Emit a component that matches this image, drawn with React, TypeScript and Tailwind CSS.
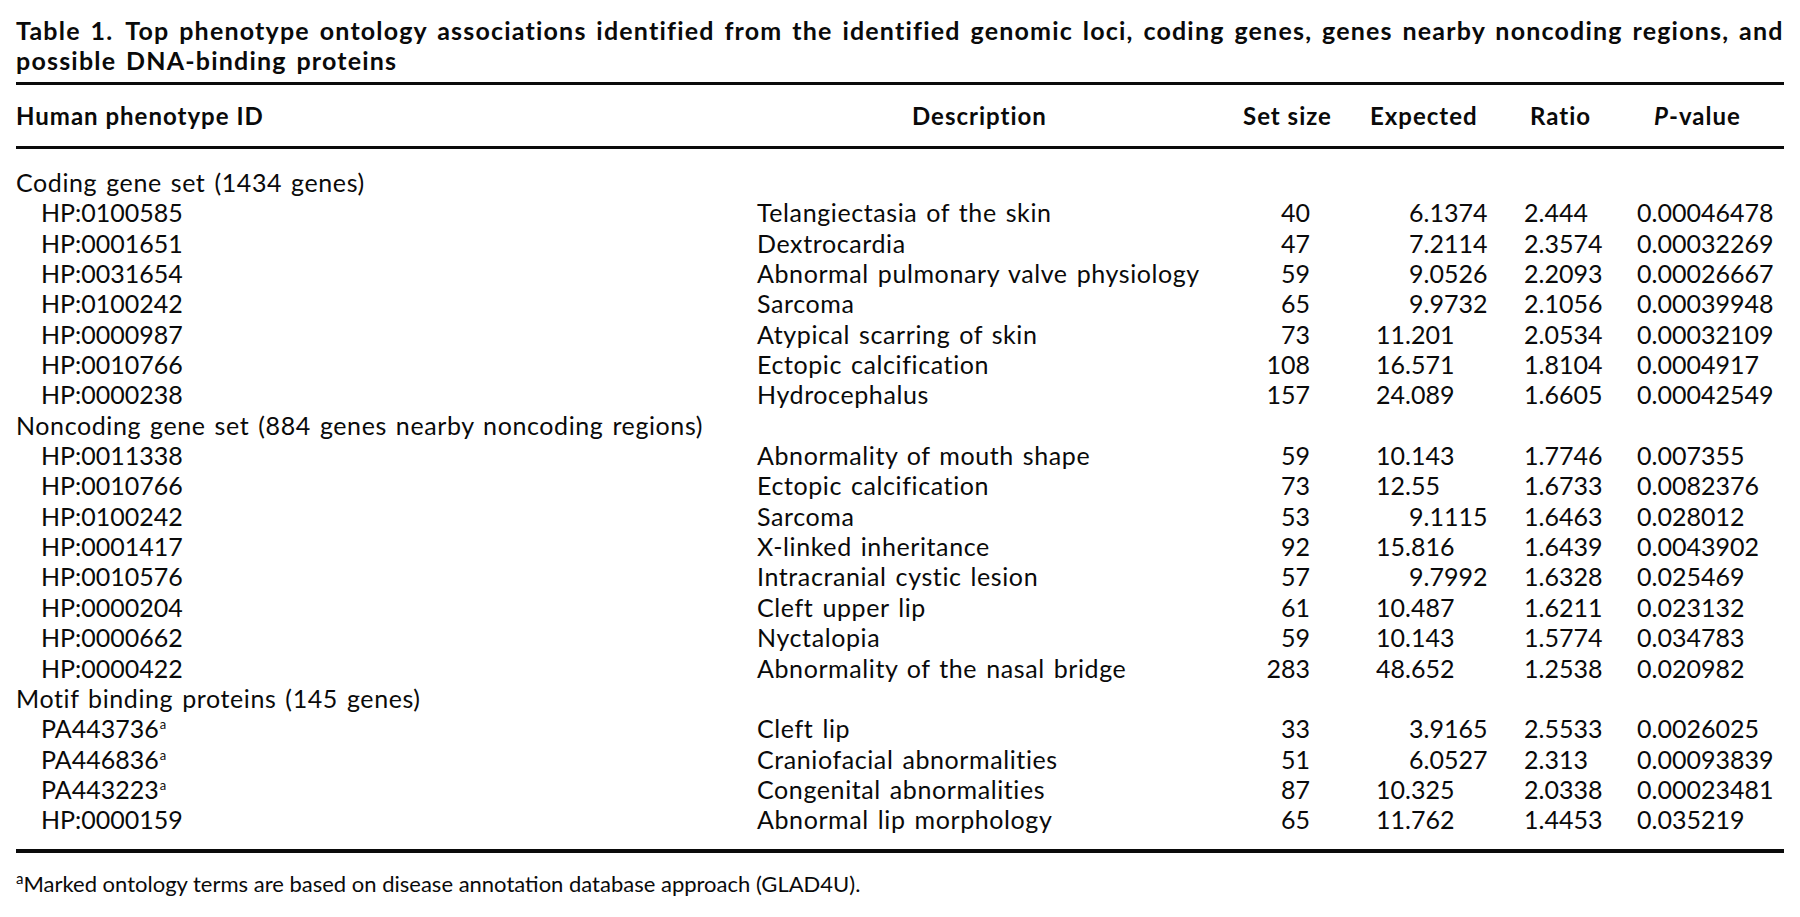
type Row = {
  id: string
  sup?: boolean
  desc: string
  size: string
  expected: string
  ratio: string
  p: string
}

type Group = { title: string; rows: Row[] }

const groups: Group[] = [
  {
    title: "Coding gene set (1434 genes)",
    rows: [
      { id: "HP:0100585", desc: "Telangiectasia of the skin", size: "40", expected: "6.1374", ratio: "2.444", p: "0.00046478" },
      { id: "HP:0001651", desc: "Dextrocardia", size: "47", expected: "7.2114", ratio: "2.3574", p: "0.00032269" },
      { id: "HP:0031654", desc: "Abnormal pulmonary valve physiology", size: "59", expected: "9.0526", ratio: "2.2093", p: "0.00026667" },
      { id: "HP:0100242", desc: "Sarcoma", size: "65", expected: "9.9732", ratio: "2.1056", p: "0.00039948" },
      { id: "HP:0000987", desc: "Atypical scarring of skin", size: "73", expected: "11.201", ratio: "2.0534", p: "0.00032109" },
      { id: "HP:0010766", desc: "Ectopic calcification", size: "108", expected: "16.571", ratio: "1.8104", p: "0.0004917" },
      { id: "HP:0000238", desc: "Hydrocephalus", size: "157", expected: "24.089", ratio: "1.6605", p: "0.00042549" },
    ],
  },
  {
    title: "Noncoding gene set (884 genes nearby noncoding regions)",
    rows: [
      { id: "HP:0011338", desc: "Abnormality of mouth shape", size: "59", expected: "10.143", ratio: "1.7746", p: "0.007355" },
      { id: "HP:0010766", desc: "Ectopic calcification", size: "73", expected: "12.55", ratio: "1.6733", p: "0.0082376" },
      { id: "HP:0100242", desc: "Sarcoma", size: "53", expected: "9.1115", ratio: "1.6463", p: "0.028012" },
      { id: "HP:0001417", desc: "X-linked inheritance", size: "92", expected: "15.816", ratio: "1.6439", p: "0.0043902" },
      { id: "HP:0010576", desc: "Intracranial cystic lesion", size: "57", expected: "9.7992", ratio: "1.6328", p: "0.025469" },
      { id: "HP:0000204", desc: "Cleft upper lip", size: "61", expected: "10.487", ratio: "1.6211", p: "0.023132" },
      { id: "HP:0000662", desc: "Nyctalopia", size: "59", expected: "10.143", ratio: "1.5774", p: "0.034783" },
      { id: "HP:0000422", desc: "Abnormality of the nasal bridge", size: "283", expected: "48.652", ratio: "1.2538", p: "0.020982" },
    ],
  },
  {
    title: "Motif binding proteins (145 genes)",
    rows: [
      { id: "PA443736", sup: true, desc: "Cleft lip", size: "33", expected: "3.9165", ratio: "2.5533", p: "0.0026025" },
      { id: "PA446836", sup: true, desc: "Craniofacial abnormalities", size: "51", expected: "6.0527", ratio: "2.313", p: "0.00093839" },
      { id: "PA443223", sup: true, desc: "Congenital abnormalities", size: "87", expected: "10.325", ratio: "2.0338", p: "0.00023481" },
      { id: "HP:0000159", desc: "Abnormal lip morphology", size: "65", expected: "11.762", ratio: "1.4453", p: "0.035219" },
    ],
  },
]

const DataRow = ({ row }: { row: Row }) => {
  // one-digit values sit a bit further right, as in the print
  const short = row.expected.indexOf(".") === 1
  return (
    <div className="flex h-[30.35px] leading-[30.35px] whitespace-nowrap">
      <div className="w-[741px] pl-[25px]">
        {row.id}
        {row.sup && <sup className="text-[13px] leading-none -top-[9px] ml-[1px]">a</sup>}
      </div>
      <div className="w-[486px] tracking-[0.6px] [word-spacing:2px]">{row.desc}</div>
      <div className="w-[67px] text-right">{row.size}</div>
      <div className={`w-[214px] ${short ? "pl-[99px]" : "pl-[66px]"}`}>{row.expected}</div>
      <div className="w-[113px]">{row.ratio}</div>
      <div className="flex-1">{row.p}</div>
    </div>
  )
}

export default function App() {
  return (
    <div className="w-[1800px] h-[917px] bg-white text-[#0a0a0a] font-['Lato',sans-serif] text-[25px]">
      <div className="px-4 pt-[15px]">
        <div className="font-bold text-[25px] leading-[30px] tracking-[1.2px] [word-spacing:2.5px]">
          <p className="whitespace-nowrap">
            Table 1.<span className="inline-block w-[12px]" />Top phenotype ontology associations identified from the identified genomic loci, coding genes, genes nearby noncoding regions, and
          </p>
          <p>possible DNA-binding proteins</p>
        </div>
        <div className="mt-[7px] h-[3px] bg-[#0a0a0a]" />

        <div className="flex h-[61px] items-center font-bold text-[24px] leading-[30px] tracking-[1px] whitespace-nowrap">
          <div className="w-[741px]">Human phenotype ID</div>
          <div className="w-[486px] pl-[155px]">Description</div>
          <div className="w-[127px]">Set size</div>
          <div className="w-[160px]">Expected</div>
          <div className="w-[124px]">Ratio</div>
          <div className="flex-1">
            <span className="italic">P</span>-value
          </div>
        </div>
        <div className="h-[3px] bg-[#0a0a0a]" />

        <div className="pt-[18px] pb-[14px]">
          {groups.map(g => (
            <div key={g.title}>
              <div className="h-[30.35px] leading-[30.35px] whitespace-nowrap tracking-[0.6px] [word-spacing:2px]">
                {g.title}
              </div>
              {g.rows.map((r, i) => (
                <DataRow key={g.title + i} row={r} />
              ))}
            </div>
          ))}
        </div>
        <div className="h-[4px] bg-[#0a0a0a]" />

        <p className="mt-[16px] text-[22px] leading-[30px]">
          <sup className="text-[15px] leading-none -top-[8px]">a</sup>Marked ontology terms are based on disease annotation database approach (GLAD4U).
        </p>
      </div>
    </div>
  )
}
